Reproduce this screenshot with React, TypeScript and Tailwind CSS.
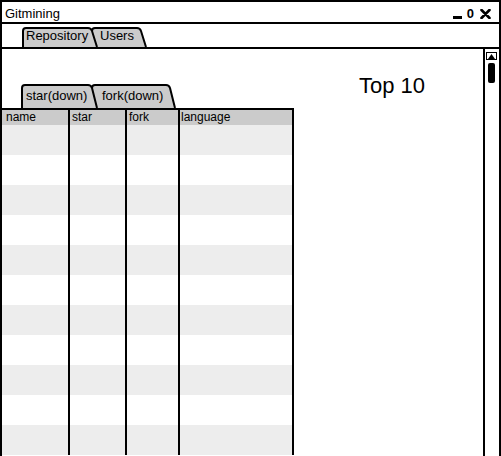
import React from "react";

function Tab({
  label,
  w,
  h,
  className,
  textClass,
}: {
  label: string;
  w: number;
  h: number;
  className: string;
  textClass: string;
}) {
  const d = `M1,${h} V4 Q1,1 4,1 H${w - 10} Q${w - 7},1 ${w - 6},4 L${w - 1},${h}`;
  return (
    <div className={`relative shrink-0 ${className}`}>
      <svg className="absolute inset-0" width={w} height={h} viewBox={`0 0 ${w} ${h}`}>
        <path d={d} fill="#cbcbcb" stroke="#000" strokeWidth="2" strokeLinejoin="round" />
      </svg>
      <span className={`relative block leading-none ${textClass}`}>{label}</span>
    </div>
  );
}

const rows = Array.from({ length: 11 }, (_, i) => i);

export default function App() {
  return (
    <div className="w-[501px] h-[456px] overflow-hidden bg-white text-black font-['Liberation_Sans',Arial,sans-serif]">
      <div className="h-[600px] flex flex-col border-x-2 border-t-2 border-black">
        {/* title bar */}
        <div className="h-[22px] shrink-0 border-b-2 border-black flex justify-between">
          <span className="text-[13px] leading-none pl-[3px] pt-[5px]">Gitmining</span>
          <div className="flex items-start pr-[8px] pt-[5px]">
            <div className="w-[9px] h-[3px] bg-black mt-[9px]" />
            <span className="text-[13px] font-bold leading-none ml-[5px]">0</span>
            <svg className="ml-[6px] mt-[2px]" width="11" height="10" viewBox="0 0 11 10">
              <path d="M1.5,1 L9.5,9 M9.5,1 L1.5,9" stroke="#000" strokeWidth="2.6" strokeLinecap="round" />
            </svg>
          </div>
        </div>

        {/* main tabs */}
        <div className="h-[25px] shrink-0 border-b-2 border-black flex items-end pl-[20px]">
          <Tab label="Repository" w={76} h={20} className="w-[76px] h-[20px] z-10" textClass="text-[13px] pl-[4px] pt-[2px]" />
          <Tab label="Users" w={56} h={20} className="w-[56px] h-[20px] -ml-[7px]" textClass="text-[13px] pl-[9px] pt-[2px]" />
        </div>

        {/* content */}
        <div className="flex flex-1">
          <div className="w-[292px] shrink-0 flex flex-col">
            <div className="flex pt-[35px] pl-[19px]">
              <Tab label="star(down)" w={77} h={24} className="w-[77px] h-[24px] z-10" textClass="text-[13px] pl-[5px] pt-[5px]" />
              <Tab label="fork(down)" w={85} h={24} className="w-[85px] h-[24px] -ml-[7px]" textClass="text-[13px] pl-[11px] pt-[5px]" />
            </div>
            <div className="border-t-2 border-r-2 border-black flex flex-col">
              <div className="h-[15px] flex bg-[#cbcbcb] text-[12px] leading-none">
                <div className="w-[68px] border-r-2 border-black pl-[4px] pt-[1px]">name</div>
                <div className="w-[57px] border-r-2 border-black pl-[2px] pt-[1px]">star</div>
                <div className="w-[53px] border-r-2 border-black pl-[2px] pt-[1px]">fork</div>
                <div className="flex-1 pl-[1px] pt-[1px]">language</div>
              </div>
              {rows.map((r) => (
                <div key={r} className={`h-[30px] flex ${r % 2 === 0 ? "bg-[#ededed]" : "bg-white"}`}>
                  <div className="w-[68px] border-r-2 border-black" />
                  <div className="w-[57px] border-r-2 border-black" />
                  <div className="w-[53px] border-r-2 border-black" />
                  <div className="flex-1" />
                </div>
              ))}
            </div>
          </div>

          <div className="flex-1">
            <div className="ml-[65px] mt-[26px] text-[22px] leading-none">Top 10</div>
          </div>

          {/* scrollbar */}
          <div className="w-[16px] shrink-0 border-l-2 border-black pt-[3px] pl-[1px]">
            <div className="w-[11px] h-[8px] border border-black flex items-center justify-center">
              <svg width="7" height="5" viewBox="0 0 7 5">
                <path d="M0,5 L3.5,0 L7,5 Z" fill="#000" />
              </svg>
            </div>
            <div className="w-[7px] h-[20px] rounded-[2px] bg-black mt-[3px] ml-[2px]" />
          </div>
        </div>
      </div>
    </div>
  );
}
